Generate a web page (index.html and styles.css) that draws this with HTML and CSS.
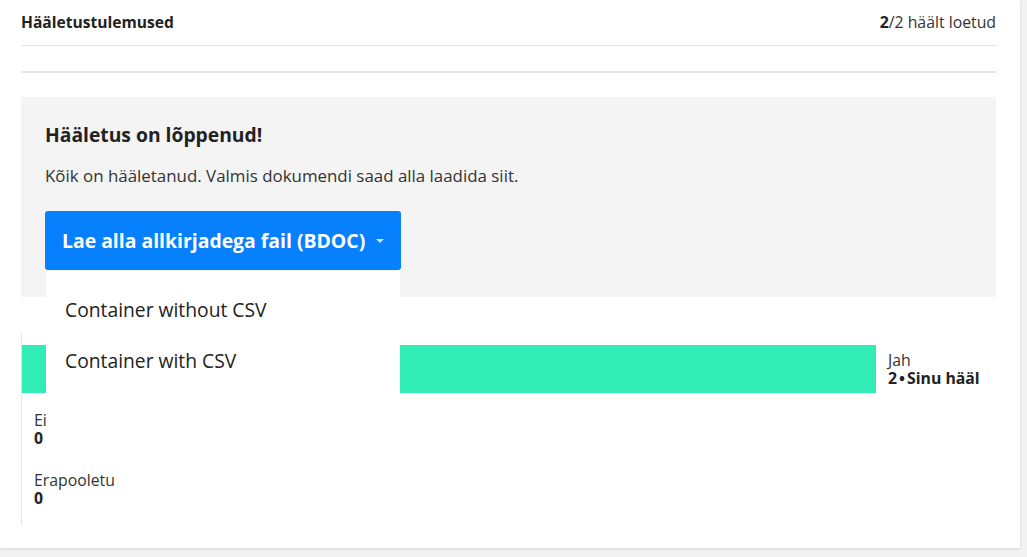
FILE: index.html
```html
<!DOCTYPE html>
<html lang="et">
<head>
<meta charset="utf-8">
<title>Hääletustulemused</title>
<link rel="stylesheet" href="styles.css">
</head>
<body>
<div class="card">
  <div class="head">
    <div class="title">Hääletustulemused</div>
    <div class="count"><b>2</b>/2 häält loetud</div>
  </div>
  <div class="rule"></div>
  <div class="notice">
    <h2>Hääletus on lõppenud!</h2>
    <p>Kõik on hääletanud. Valmis dokumendi saad alla laadida siit.</p>
    <div class="dd">
      <button class="btn">Lae alla allkirjadega fail (BDOC)<span class="caret"></span></button>
      <div class="menu">
        <div class="item">Container without CSV</div>
        <div class="item">Container with CSV</div>
      </div>
    </div>
  </div>
  <div class="chart">
    <div class="row">
      <div class="bar" style="width:854px"></div>
      <div class="lbl"><div>Jah</div><div class="num">2<span class="dot">•</span>Sinu hääl</div></div>
    </div>
    <div class="row">
      <div class="bar" style="width:0"></div>
      <div class="lbl"><div>Ei</div><div class="num">0</div></div>
    </div>
    <div class="row">
      <div class="bar" style="width:0"></div>
      <div class="lbl"><div>Erapooletu</div><div class="num">0</div></div>
    </div>
  </div>
</div>
</body>
</html>
```
FILE: styles.css
```css
html, body { margin: 0; padding: 0; }
body {
  background: #f3f3f3;
  font-family: "Open Sans", "Noto Sans", sans-serif;
  color: #222;
  width: 1027px;
  height: 557px;
  overflow: hidden;
}
.card {
  width: 975px;
  height: 548px;
  background: #fff;
  padding: 0 24px 0 21px;
  box-shadow: 0 1px 3px rgba(0,0,0,0.12);
}
.head {
  border-bottom: 1px solid #e5e5e5;
  display: flex;
  justify-content: space-between;
  align-items: center;
  line-height: 20px;
  padding-bottom: 2px;
  box-sizing: border-box;
  height: 46px;
}
.title { font-weight: 700; font-size: 15.6px; }
.count { color: #333; font-size: 15.8px; }
.count b { color: #222; }
.rule {
  margin-top: 25px;
  border-top: 2px solid #e4e4e4;
}
.notice {
  margin-top: 24px;
  background: #f4f4f4;
  height: 200px;
  box-sizing: border-box;
  padding: 24px 24px 0 24px;
  position: relative;
  z-index: 2;
}
.notice h2 {
  margin: 0;
  font-size: 19.3px;
  line-height: 27px;
  font-weight: 700;
}
.notice p {
  margin: 16px 0 0;
  font-size: 16.9px;
  line-height: 24px;
  color: #333;
}
.dd {
  margin-top: 23px;
  position: relative;
  display: inline-block;
}
.btn {
  display: flex;
  align-items: center;
  white-space: nowrap;
  height: 59px;
  background: #0780fd;
  color: #fff;
  border: 0;
  border-radius: 3px;
  font-family: inherit;
  font-weight: 700;
  font-size: 19.4px;
  padding: 0 17px;
}
.caret {
  display: inline-block;
  margin-left: 11px;
  border-top: 4px solid rgba(255,255,255,0.8);
  border-left: 4px solid transparent;
  border-right: 4px solid transparent;
}
.menu {
  position: absolute;
  top: 60px;
  left: 1px;
  width: 354px;
  background: #fff;
  padding: 13px 0 7px;
}
.item {
  font-size: 19.3px;
  line-height: 27px;
  padding: 12px 19px;
  color: #222;
}
.chart {
  margin-top: 36px;
  border-left: 1px solid #e4e4e4;
  padding: 12px 0;
  display: flex;
  flex-direction: column;
  gap: 12px;
}
.row {
  display: flex;
  align-items: center;
  height: 48px;
  gap: 12px;
}
.bar {
  height: 48px;
  background: #32ecb6;
}
.lbl {
  font-size: 15.8px;
  line-height: 18px;
  color: #333;
}
.num { font-weight: 700; color: #222; }
.dot { margin: 0 2px; }
```
